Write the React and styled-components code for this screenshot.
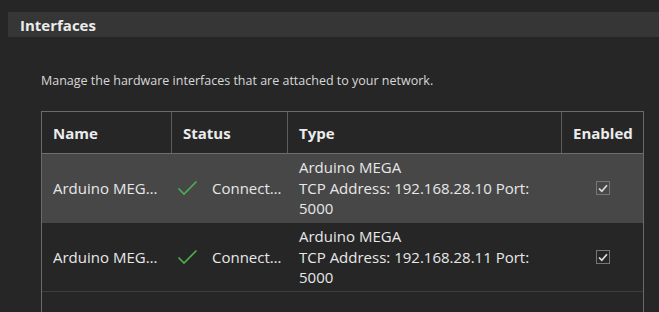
import React from "react";
import styled, { createGlobalStyle } from "styled-components";

const Global = createGlobalStyle`
  html, body { margin: 0; padding: 0; background: #262626; }
  body { font-family: "Open Sans", "Noto Sans", sans-serif; color: #e4e4e4; overflow: hidden; }
  * { box-sizing: border-box; }
`;

const Page = styled.div`
  height: 312px;
  padding: 12px 0 0 8px;
  background: #262626;
  overflow: hidden;
`;

const SectionHeader = styled.div`
  height: 25px;
  background: #363636;
  display: flex;
  align-items: center;
  padding-left: 12px;
  font-weight: 700;
  font-size: 15px;
  color: #ececec;
`;

const Content = styled.div`
  padding: 36px 15px 0 33px;
`;

const Description = styled.p`
  margin: 0;
  font-size: 12.5px;
  line-height: 16px;
  color: #d8d8d8;
`;

const Table = styled.div`
  margin-top: 22px;
  width: 603px;
  height: 260px;
  border: 1px solid #6a6a6a;
  border-bottom: none;
`;

const Grid = styled.div`
  display: grid;
  grid-template-columns: 130px 116px 274px 81px;
`;

const HeadRow = styled(Grid)`
  height: 42px;
  border-bottom: 1px solid #6e6e6e;
`;

const HeadCell = styled.div`
  display: flex;
  align-items: center;
  padding: 0 11px;
  font-weight: 700;
  font-size: 15px;
  color: #ececec;
  border-right: ${(p) => (p.$last ? "none" : "1px solid #5c5c5c")};
`;

const Row = styled(Grid)`
  height: 69px;
  background: ${(p) => (p.$selected ? "#474747" : "transparent")};
  border-bottom: 1px solid ${(p) => (p.$selected ? "#474747" : "#3e3e3e")};
`;

const Cell = styled.div`
  display: flex;
  align-items: center;
  justify-content: ${(p) => (p.$center ? "center" : "flex-start")};
  padding: 0 11px;
  font-size: 15px;
  line-height: 20.5px;
  color: #e8e8e8;
  min-width: 0;
`;

const Ellipsis = styled.span`
  white-space: nowrap;
  overflow: hidden;
  text-overflow: ellipsis;
  min-width: 0;
`;

const StatusCell = styled(Cell)`
  padding-left: 5px;
  padding-right: 3px;
  gap: 14px;
`;

const TypeText = styled.div`
  padding-right: 4px;
`;

const CheckBox = styled.span`
  width: 14px;
  height: 14px;
  border: 1px solid #767676;
  display: flex;
  align-items: center;
  justify-content: center;
`;

const GreenCheck = () => (
  <svg width="21" height="16" viewBox="0 0 21 16" style={{ flex: "none" }}>
    <path d="M1.5 8.5 L7 14 L19.5 1.5" fill="none" stroke="#4caf50" strokeWidth="1.6" />
  </svg>
);

const SmallCheck = () => (
  <svg width="10" height="9" viewBox="0 0 10 9">
    <path d="M1 4.5 L3.8 7.2 L9 1.2" fill="none" stroke="#dcdcdc" strokeWidth="1.7" />
  </svg>
);

const rows = [
  { name: "Arduino MEGA", ip: "192.168.28.10", selected: true },
  { name: "Arduino MEGA", ip: "192.168.28.11", selected: false },
];

export default function App() {
  return (
    <>
      <Global />
      <Page>
        <SectionHeader>Interfaces</SectionHeader>
        <Content>
          <Description>Manage the hardware interfaces that are attached to your network.</Description>
          <Table>
            <HeadRow>
              <HeadCell>Name</HeadCell>
              <HeadCell>Status</HeadCell>
              <HeadCell>Type</HeadCell>
              <HeadCell $last>Enabled</HeadCell>
            </HeadRow>
            {rows.map((r) => (
              <Row key={r.ip} $selected={r.selected}>
                <Cell><Ellipsis>{r.name} 1</Ellipsis></Cell>
                <StatusCell>
                  <GreenCheck />
                  <Ellipsis>Connected</Ellipsis>
                </StatusCell>
                <Cell>
                  <TypeText>
                    {r.name}
                    <br />
                    TCP Address: {r.ip} Port: 5000
                  </TypeText>
                </Cell>
                <Cell $center>
                  <CheckBox><SmallCheck /></CheckBox>
                </Cell>
              </Row>
            ))}
          </Table>
        </Content>
      </Page>
    </>
  );
}
